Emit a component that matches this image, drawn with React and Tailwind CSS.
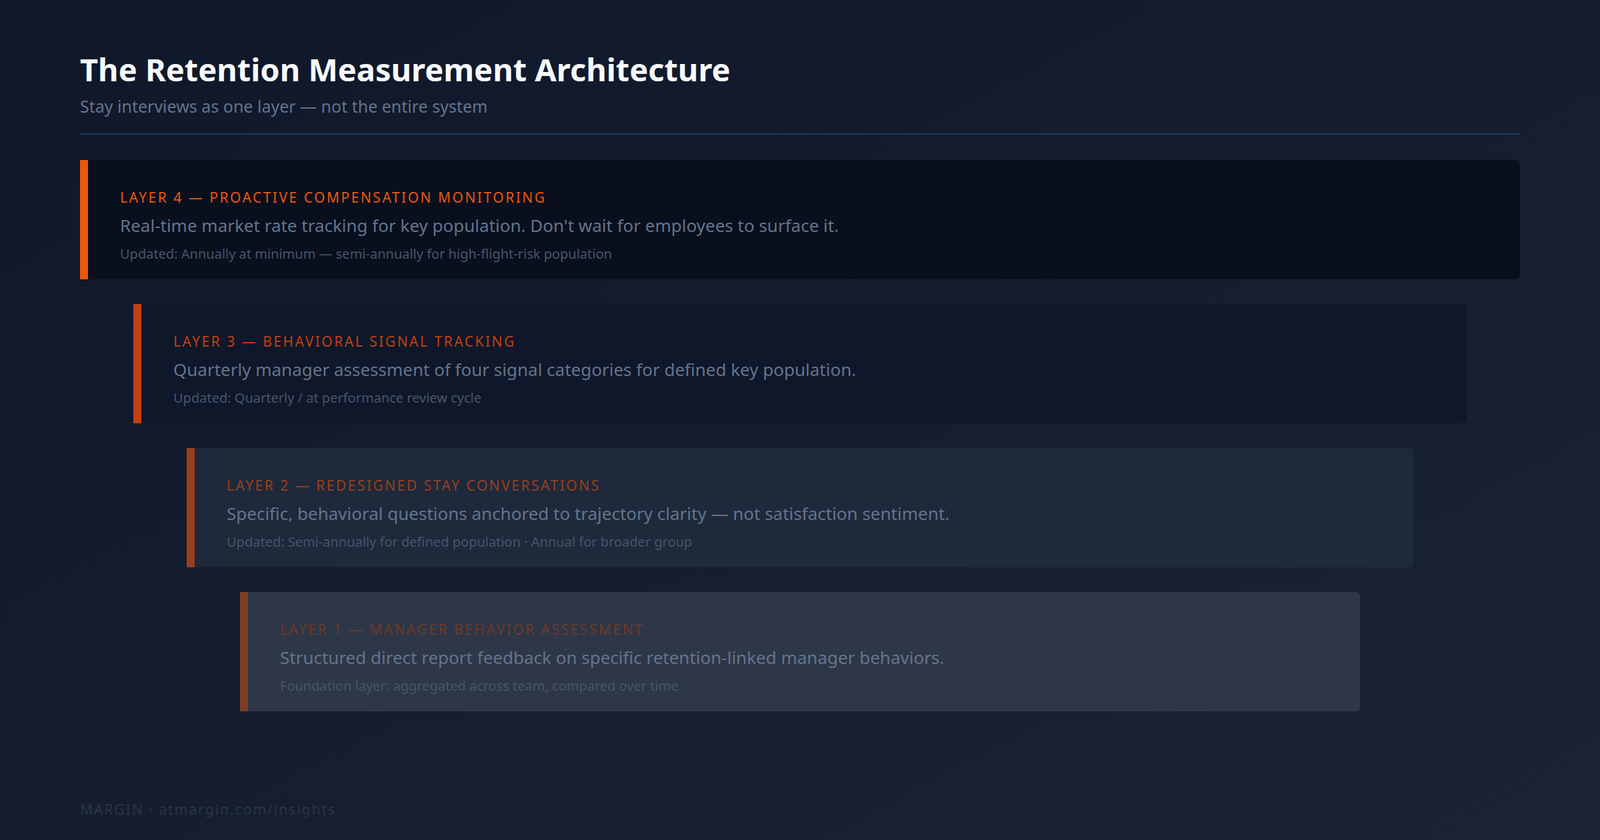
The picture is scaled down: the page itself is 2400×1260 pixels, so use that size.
const layers = [
  {
    indent: 'ml-0 mr-0',
    bg: 'bg-[#0a0f1e]',
    bar: 'bg-[#ea580c]',
    label: 'text-[#ea580c]',
    title: 'LAYER 4 — PROACTIVE COMPENSATION MONITORING',
    body: "Real-time market rate tracking for key population. Don't wait for employees to surface it.",
    note: 'Updated: Annually at minimum — semi-annually for high-flight-risk population',
  },
  {
    indent: 'ml-[80px] mr-[80px]',
    bg: 'bg-[#0f172a]',
    bar: 'bg-[#c2410c]',
    label: 'text-[#c2410c]',
    title: 'LAYER 3 — BEHAVIORAL SIGNAL TRACKING',
    body: 'Quarterly manager assessment of four signal categories for defined key population.',
    note: 'Updated: Quarterly / at performance review cycle',
  },
  {
    indent: 'ml-[160px] mr-[160px]',
    bg: 'bg-[#1e293b]',
    bar: 'bg-[#9a3f1c]',
    label: 'text-[#9a3f1c]',
    title: 'LAYER 2 — REDESIGNED STAY CONVERSATIONS',
    body: 'Specific, behavioral questions anchored to trajectory clarity — not satisfaction sentiment.',
    note: 'Updated: Semi-annually for defined population · Annual for broader group',
  },
  {
    indent: 'ml-[240px] mr-[240px]',
    bg: 'bg-[#2d3748]',
    bar: 'bg-[#7c3f26]',
    label: 'text-[#6e3a26]',
    title: 'LAYER 1 — MANAGER BEHAVIOR ASSESSMENT',
    body: 'Structured direct report feedback on specific retention-linked manager behaviors.',
    note: 'Foundation layer: aggregated across team, compared over time',
  },
];

export default function App() {
  return (
    <div className="w-[2400px] h-[1260px] overflow-hidden bg-gradient-to-br from-[#0f172a] to-[#1b2436] px-[120px] pt-[74px] flex flex-col font-[family-name:'Liberation_Sans',Arial,sans-serif]">
      <h1 className="font-[family-name:'DejaVu_Serif',serif] font-bold text-[47px] leading-[60px] text-[#f8fafc]">
        The Retention Measurement Architecture
      </h1>
      <p className="text-[25px] leading-[34px] text-[#64748b] mt-[8px]">Stay interviews as one layer — not the entire system</p>
      <div className="h-[2px] bg-[#1e3a5f] mt-[24px] mb-[38px]" />
      <div className="flex flex-col gap-[37px]">
        {layers.map(l => (
          <div key={l.title} className={`${l.indent} ${l.bg} rounded-r-[6px] flex h-[179px]`}>
            <div className={`${l.bar} w-[12px] shrink-0`} />
            <div className="pl-[48px] pt-[42px]">
              <div className={`${l.label} text-[21px] leading-[28px] tracking-[2.5px]`}>{l.title}</div>
              <div className="text-[26px] leading-[34px] text-[#64748b] mt-[11px]">{l.body}</div>
              <div className="text-[20px] leading-[28px] text-[#475569] mt-[12px]">{l.note}</div>
            </div>
          </div>
        ))}
      </div>
      <div className="mt-auto mb-[30px] text-[21px] tracking-[2px] text-[#2a3548]">MARGIN · atmargin.com/insights</div>
    </div>
  );
}
